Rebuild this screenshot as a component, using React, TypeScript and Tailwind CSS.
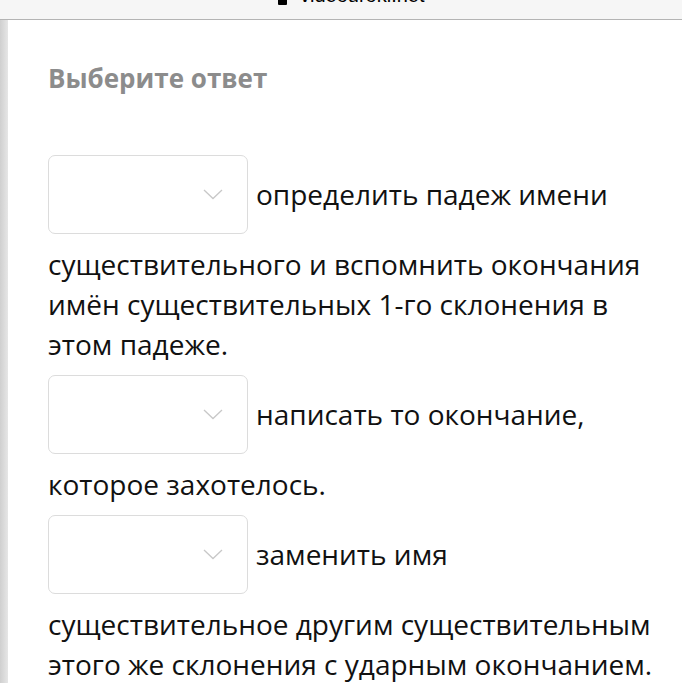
import React from "react";

function Select() {
  return (
    <span className="inline-block align-[-39.5px] relative w-[200px] h-[79px] my-[10.5px] mr-[8px] rounded-[7px] border border-[#dcdcdc] bg-white">
      <svg
        className="absolute left-[154px] top-[33px]"
        width="20"
        height="11"
        viewBox="0 0 20 11"
        fill="none"
      >
        <path d="M1 1 L10 9.5 L19 1" stroke="#c8c8c8" strokeWidth="1.3" />
      </svg>
    </span>
  );
}

export default function App() {
  return (
    <div className="w-[682px] h-[683px] overflow-hidden bg-white relative" style={{ fontFamily: '"Open Sans", "Noto Sans", sans-serif' }}>
      <div className="h-[20px] bg-[#f6f6f6] border-b border-[#b4b4b4] overflow-hidden relative">
        <div className="absolute left-[278px] top-[-3px] w-[9px] h-[8px] bg-black rounded-[1px]" />
        <div className="absolute left-[300px] top-[-15px] text-[20px] leading-[20px] text-black" style={{ fontFamily: '"Liberation Sans", Arial, sans-serif' }}>
          videouroki.net
        </div>
      </div>
      <div className="flex">
        <div className="w-[8px] shrink-0 bg-gradient-to-r from-[#cfcfcf] to-[#e6e6e6] h-[663px]" />
        <div className="pl-[40px] pr-[18px]">
          <div className="pt-[40px] text-[26px] leading-[36px] font-bold text-[#8c8c8c]">Выберите ответ</div>
          <div className="mt-[48px] text-[28px] leading-[40px] text-[#111]">
            <div>
              <Select />
              определить падеж имени существительного и вспомнить окончания имён существительных 1-го склонения в этом падеже.
            </div>
            <div>
              <Select />
              написать то окончание, которое захотелось.
            </div>
            <div>
              <Select />
              заменить имя существительное другим существительным этого же склонения с ударным окончанием.
            </div>
          </div>
        </div>
      </div>
    </div>
  );
}
